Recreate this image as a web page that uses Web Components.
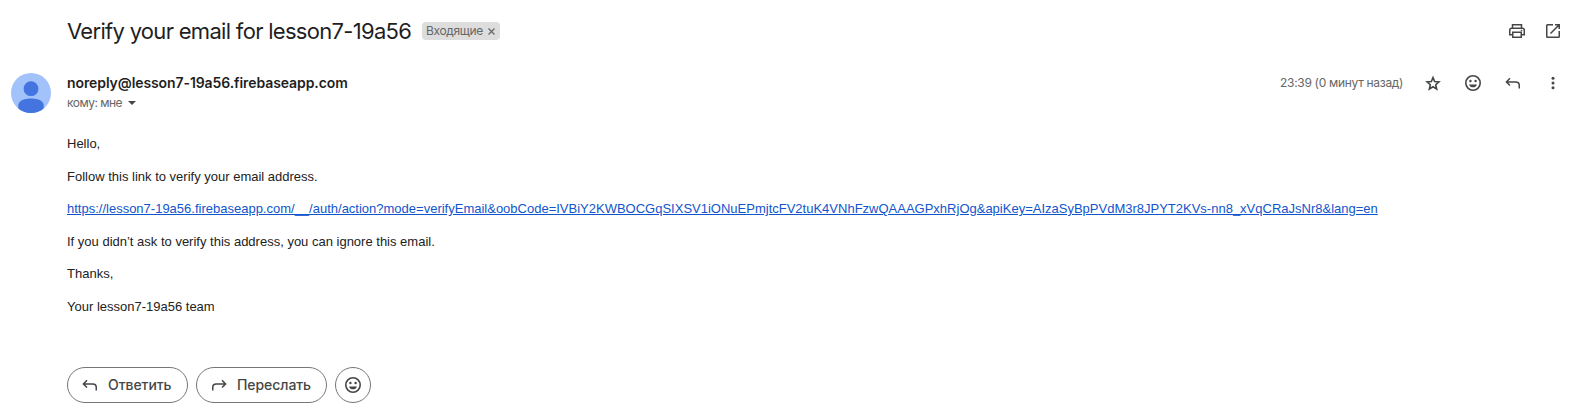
<!DOCTYPE html>
<html lang="ru">
<head>
<meta charset="utf-8">
<title>Verify your email for lesson7-19a56</title>
<style>
body{margin:0;background:#fff;overflow:hidden}
</style>
</head>
<body>
<mail-view></mail-view>
<script>
const ICONS = {
  print: '<path fill="none" stroke="currentColor" stroke-width="1.5" d="M5.5 6.5V3.75h9V6.5M5.5 13.75H2.75V9.2Q2.75 7.25 4.7 7.25h10.6q1.95 0 1.95 1.95v4.55H14.5M5.75 11.25h8.5v5h-8.5z"/><circle cx="14.5" cy="9.5" r=".8"/>',
  open: '<path fill="none" stroke="currentColor" stroke-width="1.5" d="M10 3.75H4.5q-.75 0-.75.75v11q0 .75.75.75h11q.75 0 .75-.75V10M12 3.75h4.25V8M16 4L7.5 12.5"/>',
  star: '<path fill="none" stroke="currentColor" stroke-width="1.6" d="M10 4.6l1.65 3.95 4.3.37-3.25 2.83.97 4.2L10 13.7l-3.67 2.25.97-4.2-3.25-2.83 4.3-.37z"/>',
  smile: '<circle cx="10" cy="10" r="7.2" fill="none" stroke="currentColor" stroke-width="1.6"/><circle cx="7.4" cy="8" r="1.2"/><circle cx="12.6" cy="8" r="1.2"/><path d="M6 11.4h8Q12.9 14.3 10 14.3T6 11.4z"/>',
  reply: '<path fill="none" stroke="currentColor" stroke-width="1.5" d="M7 5.2L3.4 8.9 7 12.6M3.8 8.9h9q3.45 0 3.45 3.45V15.5"/>',
  forward: '<path fill="none" stroke="currentColor" stroke-width="1.5" d="M13 5.2l3.6 3.7-3.6 3.7M16.2 8.9h-9q-3.45 0-3.45 3.45V15.5"/>',
  more: '<circle cx="10" cy="5.3" r="1.5"/><circle cx="10" cy="10" r="1.5"/><circle cx="10" cy="14.7" r="1.5"/>'
};
const define = (name, html) => customElements.define(name, class extends HTMLElement {
  constructor() {
    super();
    this.attachShadow({mode: 'open'}).innerHTML = html;
  }
});

customElements.define('mail-icon', class extends HTMLElement {
  constructor() { super(); this.attachShadow({mode: 'open'}); }
  connectedCallback() {
    this.shadowRoot.innerHTML = `<style>:host{display:block;width:20px;height:20px;flex:none;color:#444746}svg{display:block}</style>
    <svg width="20" height="20" viewBox="0 0 20 20" fill="currentColor">${ICONS[this.getAttribute('name')]}</svg>`;
  }
});

define('mail-label', `<style>
:host{display:flex;align-items:center;box-sizing:border-box;width:78px;height:18px;padding:0 5px 0 4px;border-radius:4px;background:#ddd;color:#666;font:12px/18px Inter,sans-serif;letter-spacing:-.35px;white-space:nowrap;justify-content:space-between}
svg{display:block;margin-top:1px}
</style><span><slot></slot></span><svg width="7" height="7" viewBox="0 0 7 7"><path d="M.5.5l6 6M6.5.5l-6 6" stroke="#666" stroke-width="1.2"/></svg>`);

define('mail-avatar', `<style>:host{display:block;width:40px;height:40px;flex:none}svg{display:block}</style>
<svg width="40" height="40" viewBox="0 0 40 40"><defs><clipPath id="c"><circle cx="20" cy="20" r="20"/></clipPath></defs><g clip-path="url(#c)"><path fill="#a1c2fa" d="M0 0h40v40H0z"/><circle cx="20" cy="15.7" r="7.4" fill="#4374e0"/><path fill="#4374e0" d="M7.3 40V32.5C7.3 27.5 14 25.6 20 25.6s12.7 1.9 12.7 6.9V40z"/></g></svg>`);

define('mail-button', `<style>
:host{display:flex;align-items:center;justify-content:flex-start;box-sizing:border-box;height:36px;border:1px solid #747775;border-radius:18px;padding:0 0 0 12px;gap:8px;color:#444746;font:500 14px/20px Inter,sans-serif;letter-spacing:-.07px;white-space:nowrap}
:host([round]){padding:0 0 0 7px}
</style><slot name="icon"></slot><slot></slot>`);

define('mail-subject', `<style>
:host{display:flex;align-items:center;height:62px;padding:0 15px 0 67px}
h1{margin:0;font:400 22px/28px Inter,sans-serif;color:#1f1f1f;white-space:nowrap;width:355px;letter-spacing:-.7px}
.actions{margin-left:auto;display:flex;gap:16px}
</style><h1><slot></slot></h1><slot name="label"></slot><div class="actions"><mail-icon name="print"></mail-icon><mail-icon name="open"></mail-icon></div>`);

define('mail-sender', `<style>
:host{display:flex;height:62px;padding:0 15px 0 11px;box-sizing:border-box}
mail-avatar{margin-top:11px}
.who{margin-left:16px;padding-top:11px}
.name{font:600 14px/20px Inter,sans-serif;color:#1f1f1f;white-space:nowrap;letter-spacing:-.09px}
.to{display:flex;align-items:center;font:12px/20px Inter,sans-serif;color:#666;letter-spacing:-.5px}
.to span{width:54px;white-space:nowrap}
.to i{margin-left:7px;border:4px solid transparent;border-top:4.5px solid #444746;border-bottom:0}
.meta{margin-left:auto;display:flex;align-items:center;height:20px;margin-top:11px;gap:20px}
time{font:12px/20px Inter,sans-serif;color:#666;white-space:nowrap;width:123px;letter-spacing:-.3px}
</style><mail-avatar></mail-avatar>
<div class="who"><div class="name"><slot name="name"></slot></div><div class="to"><span><slot name="to"></slot></span><i></i></div></div>
<div class="meta"><time><slot name="time"></slot></time><mail-icon name="star"></mail-icon><mail-icon name="smile"></mail-icon><mail-icon name="reply"></mail-icon><mail-icon name="more"></mail-icon></div>`);

define('mail-body', `<style>
:host{display:block;box-sizing:border-box;height:243px;padding:10px 0 0 67px;font:13px/19.5px "Liberation Sans",Arial,sans-serif;color:#222}
::slotted(p){margin:0 0 13.1px!important}
</style><slot></slot>`);

define('mail-view', `<style>
:host{display:block;width:1578px;height:418px;background:#fff}
a{color:#15c;text-decoration:underline;white-space:nowrap}
.replies{display:flex;gap:8px;padding-left:67px}
</style>
<mail-subject>Verify your email for lesson7-19a56<mail-label slot="label">Входящие</mail-label></mail-subject>
<mail-sender><span slot="name">noreply@lesson7-19a56.firebaseapp.com</span><span slot="to">кому: мне</span><span slot="time">23:39 (0 минут назад)</span></mail-sender>
<mail-body><p>Hello,</p><p>Follow this link to verify your email address.</p><p><a href="#">https://lesson7-19a56.firebaseapp.com/__/auth/action?mode=verifyEmail&amp;oobCode=IVBiY2KWBOCGqSIXSV1iONuEPmjtcFV2tuK4VNhFzwQAAAGPxhRjOg&amp;apiKey=AIzaSyBpPVdM3r8JPYT2KVs-nn8_xVqCRaJsNr8&amp;lang=en</a></p><p>If you didn’t ask to verify this address, you can ignore this email.</p><p>Thanks,</p><p>Your lesson7-19a56 team</p></mail-body>
<div class="replies"><mail-button style="width:121px"><mail-icon slot="icon" name="reply"></mail-icon>Ответить</mail-button><mail-button style="width:131px"><mail-icon slot="icon" name="forward"></mail-icon>Переслать</mail-button><mail-button round style="width:36px"><mail-icon slot="icon" name="smile"></mail-icon></mail-button></div>`);
</script>
</body>
</html>
